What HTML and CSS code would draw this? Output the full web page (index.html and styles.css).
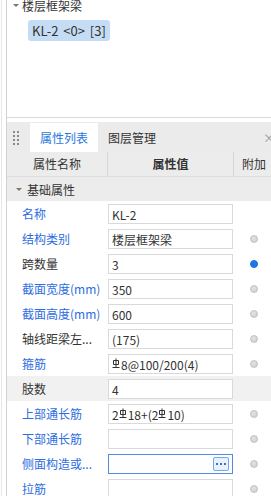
FILE: index.html
```html
<!DOCTYPE html>
<html lang="zh-CN">
<head>
    <meta charset="UTF-8">
    <meta name="viewport" content="width=device-width, initial-scale=1.0">
    <title>属性列表</title>
    <link rel="stylesheet" href="styles.css">
</head>
<body>
    <div class="frame">
        <div class="pane">
            <div class="tree">
                <div class="tree-node"><span class="caret"></span>楼层框架梁</div>
                <div class="tree-leaf"><span class="chip">KL-2 &lt;0&gt; [3]</span></div>
            </div>

            <div class="props">
                <div class="tabs">
                    <span class="grip">
                        <i></i><i></i><i></i><i></i><i></i><i></i><i></i><i></i>
                    </span>
                    <span class="tab active">属性列表</span>
                    <span class="tab">图层管理</span>
                    <span class="tab-close">×</span>
                </div>

                <div class="grid">
                    <div class="row head">
                        <div class="cell">属性名称</div>
                        <div class="cell strong">属性值</div>
                        <div class="cell extra">附加</div>
                    </div>
                    <div class="row group">
                        <span class="caret"></span>基础属性
                    </div>

                    <div class="row">
                        <div class="name blue">名称</div>
                        <div class="val"><div class="box">KL-2</div></div>
                        <div class="add"></div>
                    </div>
                    <div class="row">
                        <div class="name blue">结构类别</div>
                        <div class="val"><div class="box">楼层框架梁</div></div>
                        <div class="add"><span class="radio"></span></div>
                    </div>
                    <div class="row">
                        <div class="name">跨数量</div>
                        <div class="val"><div class="box">3</div></div>
                        <div class="add"><span class="radio on"></span></div>
                    </div>
                    <div class="row">
                        <div class="name blue">截面宽度(mm)</div>
                        <div class="val"><div class="box">350</div></div>
                        <div class="add"><span class="radio"></span></div>
                    </div>
                    <div class="row">
                        <div class="name blue">截面高度(mm)</div>
                        <div class="val"><div class="box">600</div></div>
                        <div class="add"><span class="radio"></span></div>
                    </div>
                    <div class="row">
                        <div class="name">轴线距梁左...</div>
                        <div class="val"><div class="box">(175)</div></div>
                        <div class="add"><span class="radio"></span></div>
                    </div>
                    <div class="row">
                        <div class="name blue">箍筋</div>
                        <div class="val"><div class="box"><svg class="bar" viewBox="0 0 8 10"><path d="M4 0.5V9.5M1.5 2.5H6.5V6.5H1.5ZM0.5 9.5H7.5"/></svg>8@100/200(4)</div></div>
                        <div class="add"><span class="radio"></span></div>
                    </div>
                    <div class="row shade">
                        <div class="name">肢数</div>
                        <div class="val"><div class="box">4</div></div>
                        <div class="add"></div>
                    </div>
                    <div class="row">
                        <div class="name blue">上部通长筋</div>
                        <div class="val"><div class="box">2<svg class="bar" viewBox="0 0 8 10"><path d="M4 0.5V9.5M1.5 2.5H6.5V6.5H1.5ZM0.5 9.5H7.5"/></svg>18+(2<svg class="bar" viewBox="0 0 8 10"><path d="M4 0.5V9.5M1.5 2.5H6.5V6.5H1.5ZM0.5 9.5H7.5"/></svg>10)</div></div>
                        <div class="add"><span class="radio"></span></div>
                    </div>
                    <div class="row">
                        <div class="name blue">下部通长筋</div>
                        <div class="val"><div class="box"></div></div>
                        <div class="add"><span class="radio"></span></div>
                    </div>
                    <div class="row">
                        <div class="name blue">侧面构造或...</div>
                        <div class="val"><div class="box focus"><span class="more"><i></i><i></i><i></i></span></div></div>
                        <div class="add"><span class="radio"></span></div>
                    </div>
                    <div class="row">
                        <div class="name blue">拉筋</div>
                        <div class="val"><div class="box"></div></div>
                        <div class="add"><span class="radio"></span></div>
                    </div>
                </div>
            </div>
        </div>
    </div>
</body>
</html>
```

FILE: styles.css
```css
html, body {
    margin: 0;
    padding: 0;
    overflow: hidden;
    height: 496px;
}
body {
    font-family: "Noto Sans CJK SC", "Noto Sans", sans-serif;
    font-size: 12px;
    color: #333;
    background-color: #fff;
}
.frame {
    margin-left: 1px;
    border-left: 1px solid #e6e6e6;
    padding-left: 4px;
    height: 496px;
}
.pane {
    width: 275px;
    height: 496px;
    border-left: 1px solid #d2d2d2;
}

/* tree */
.tree {
    height: 117px;
    border-bottom: 1px solid #d9d9d9;
    margin-bottom: 4px;
    overflow: hidden;
}
.tree-node {
    display: flex;
    align-items: center;
    margin-top: -3px;
    padding-left: 6px;
    line-height: 17px;
    font-size: 12px;
}
.caret {
    width: 0;
    height: 0;
    border-left: 3px solid transparent;
    border-right: 3px solid transparent;
    border-top: 3px solid #777;
    margin-right: 3px;
}
.tree-leaf {
    margin-top: 6px;
    padding-left: 21px;
}
.chip {
    display: inline-block;
    height: 21px;
    line-height: 21px;
    padding: 0 4px;
    background-color: #c5dcf5;
    border-radius: 3px;
    font-size: 13px;
    word-spacing: 2px;
}

/* tabs */
.props {
    background-color: #fff;
}
.tabs {
    display: flex;
    align-items: stretch;
    height: 29px;
    padding-top: 1px;
    background-color: #ebebec;
}
.grip {
    display: grid;
    grid-template-columns: 2px 2px;
    grid-auto-rows: 2px;
    column-gap: 2px;
    row-gap: 2px;
    align-self: center;
    margin: 0 11px 0 6px;
}
.grip i {
    background-color: #8a8a8a;
}
.tab {
    padding: 0 10px;
    line-height: 29px;
    font-size: 12px;
}
.tab.active {
    background-color: #fff;
    color: #2a78e0;
}
.tab-close {
    margin-left: auto;
    padding-right: 7px;
    line-height: 29px;
    color: #999;
}

/* property grid */
.row {
    display: grid;
    grid-template-columns: 101px 126px 1fr;
    height: 25px;
}
.row.head {
    height: 24px;
    background-color: #ececec;
    border-bottom: 1px solid #dcdcdc;
}
.head .cell {
    line-height: 24px;
    text-align: center;
    border-right: 1px solid #d6d6d6;
}
.head .cell.strong {
    font-weight: bold;
}
.head .cell.extra {
    text-align: left;
    padding-left: 8px;
    border-right: none;
}
.row.group {
    display: flex;
    align-items: center;
    height: 24px;
    padding-left: 9px;
    background-color: #ececec;
}
.group .caret {
    margin-right: 5px;
}
.row.shade {
    background-color: #f1f1f1;
}
.name {
    padding-left: 15px;
    line-height: 25px;
    white-space: nowrap;
    overflow: hidden;
}
.name.blue {
    color: #2c6ddf;
}
.val {
    padding-top: 3px;
}
.box {
    display: flex;
    align-items: center;
    box-sizing: border-box;
    width: 125px;
    height: 20px;
    padding: 0 3px;
    border: 1px solid #d9d9d9;
    background-color: #fff;
    white-space: nowrap;
    font-size: 12px;
}
.box.focus {
    border-color: #4f8ae0;
    justify-content: flex-end;
    padding-right: 3px;
}
.bar {
    width: 8px;
    height: 10px;
    margin: 0 1px 2px 0;
    fill: none;
    stroke: #333;
    stroke-width: 1;
}
.more {
    display: flex;
    align-items: center;
    justify-content: center;
    gap: 2px;
    box-sizing: border-box;
    width: 16px;
    height: 14px;
    border: 1px solid #78a6e8;
    border-radius: 2px;
    background-color: #e9f1fc;
}
.more i {
    width: 2px;
    height: 2px;
    background-color: #2f74dc;
}
.add {
    display: flex;
    align-items: center;
    padding-left: 16px;
}
.radio {
    width: 8px;
    height: 8px;
    box-sizing: border-box;
    border-radius: 50%;
    border: 1px solid #c2c2c2;
    background: radial-gradient(circle at 40% 35%, #e2e2e2, #cdcdcd);
}
.radio.on {
    border-color: #1b6fdc;
    background: #1f76e4;
}
```
